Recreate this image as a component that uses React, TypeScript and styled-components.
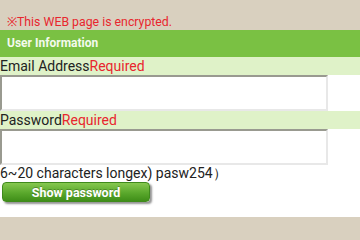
import React from "react";
import styled, { createGlobalStyle } from "styled-components";

const GlobalStyle = createGlobalStyle`
  html, body {
    margin: 0;
    padding: 0;
    background: #d9d0bf;
    font-family: Roboto, "Liberation Sans", sans-serif;
  }
`;

const Page = styled.div`
  width: 360px;
  height: 240px;
  overflow: hidden;
  background: #d9d0bf;
`;

const TopArea = styled.div`
  height: 30px;
  display: flex;
  flex-direction: column;
`;

const Notice = styled.p`
  margin: 14px 0 0 7px;
  font-size: 12.3px;
  line-height: 16px;
  color: #e8262e;
`;

const SectionHeader = styled.h2`
  margin: 0;
  height: 27px;
  line-height: 27px;
  padding-left: 7px;
  background: #7ac143;
  color: #f4faee;
  font-size: 12px;
  font-weight: 700;
`;

const Form = styled.form`
  background: #ffffff;
  padding-bottom: 15px;
`;

const LabelRow = styled.label`
  display: block;
  height: 18px;
  line-height: 18px;
  background: #dff2c8;
  font-size: 14px;
  color: #222;
`;

const Required = styled.span`
  color: #e8262e;
`;

const TextInput = styled.input`
  display: block;
  box-sizing: border-box;
  width: 328px;
  height: 36px;
  margin: 0;
  padding: 0 4px;
  background: #fff;
  border-style: solid;
  border-width: 2px;
  border-color: #999a90 #e8e8e8 #e8e8e8 #999a90;
  outline: none;
`;

const Hint = styled.div`
  font-size: 14px;
  line-height: 17px;
  color: #222;
`;

const ShowButton = styled.button`
  display: block;
  margin: 0 0 0 2px;
  width: 148px;
  height: 20px;
  border: 1px solid #3f8a1c;
  border-radius: 4px;
  background: linear-gradient(#86c850, #5aa82c 55%, #3f8e18);
  color: #fff;
  font-family: Roboto, "Liberation Sans", sans-serif;
  font-size: 12.5px;
  font-weight: 700;
  line-height: 17px;
  padding: 0;
  box-shadow: 2px 2px 2px rgba(60, 60, 60, 0.55);
  text-shadow: 0 -1px 0 rgba(0, 0, 0, 0.25);
`;

export default function App() {
  return (
    <Page>
      <GlobalStyle />
      <TopArea>
        <Notice>※This WEB page is encrypted.</Notice>
      </TopArea>
      <SectionHeader>User Information</SectionHeader>
      <Form onSubmit={(e) => e.preventDefault()}>
        <LabelRow>
          Email Address<Required>Required</Required>
        </LabelRow>
        <TextInput type="email" />
        <LabelRow>
          Password<Required>Required</Required>
        </LabelRow>
        <TextInput type="password" />
        <Hint>6~20 characters longex) pasw254）</Hint>
        <ShowButton type="button">Show password</ShowButton>
      </Form>
    </Page>
  );
}
